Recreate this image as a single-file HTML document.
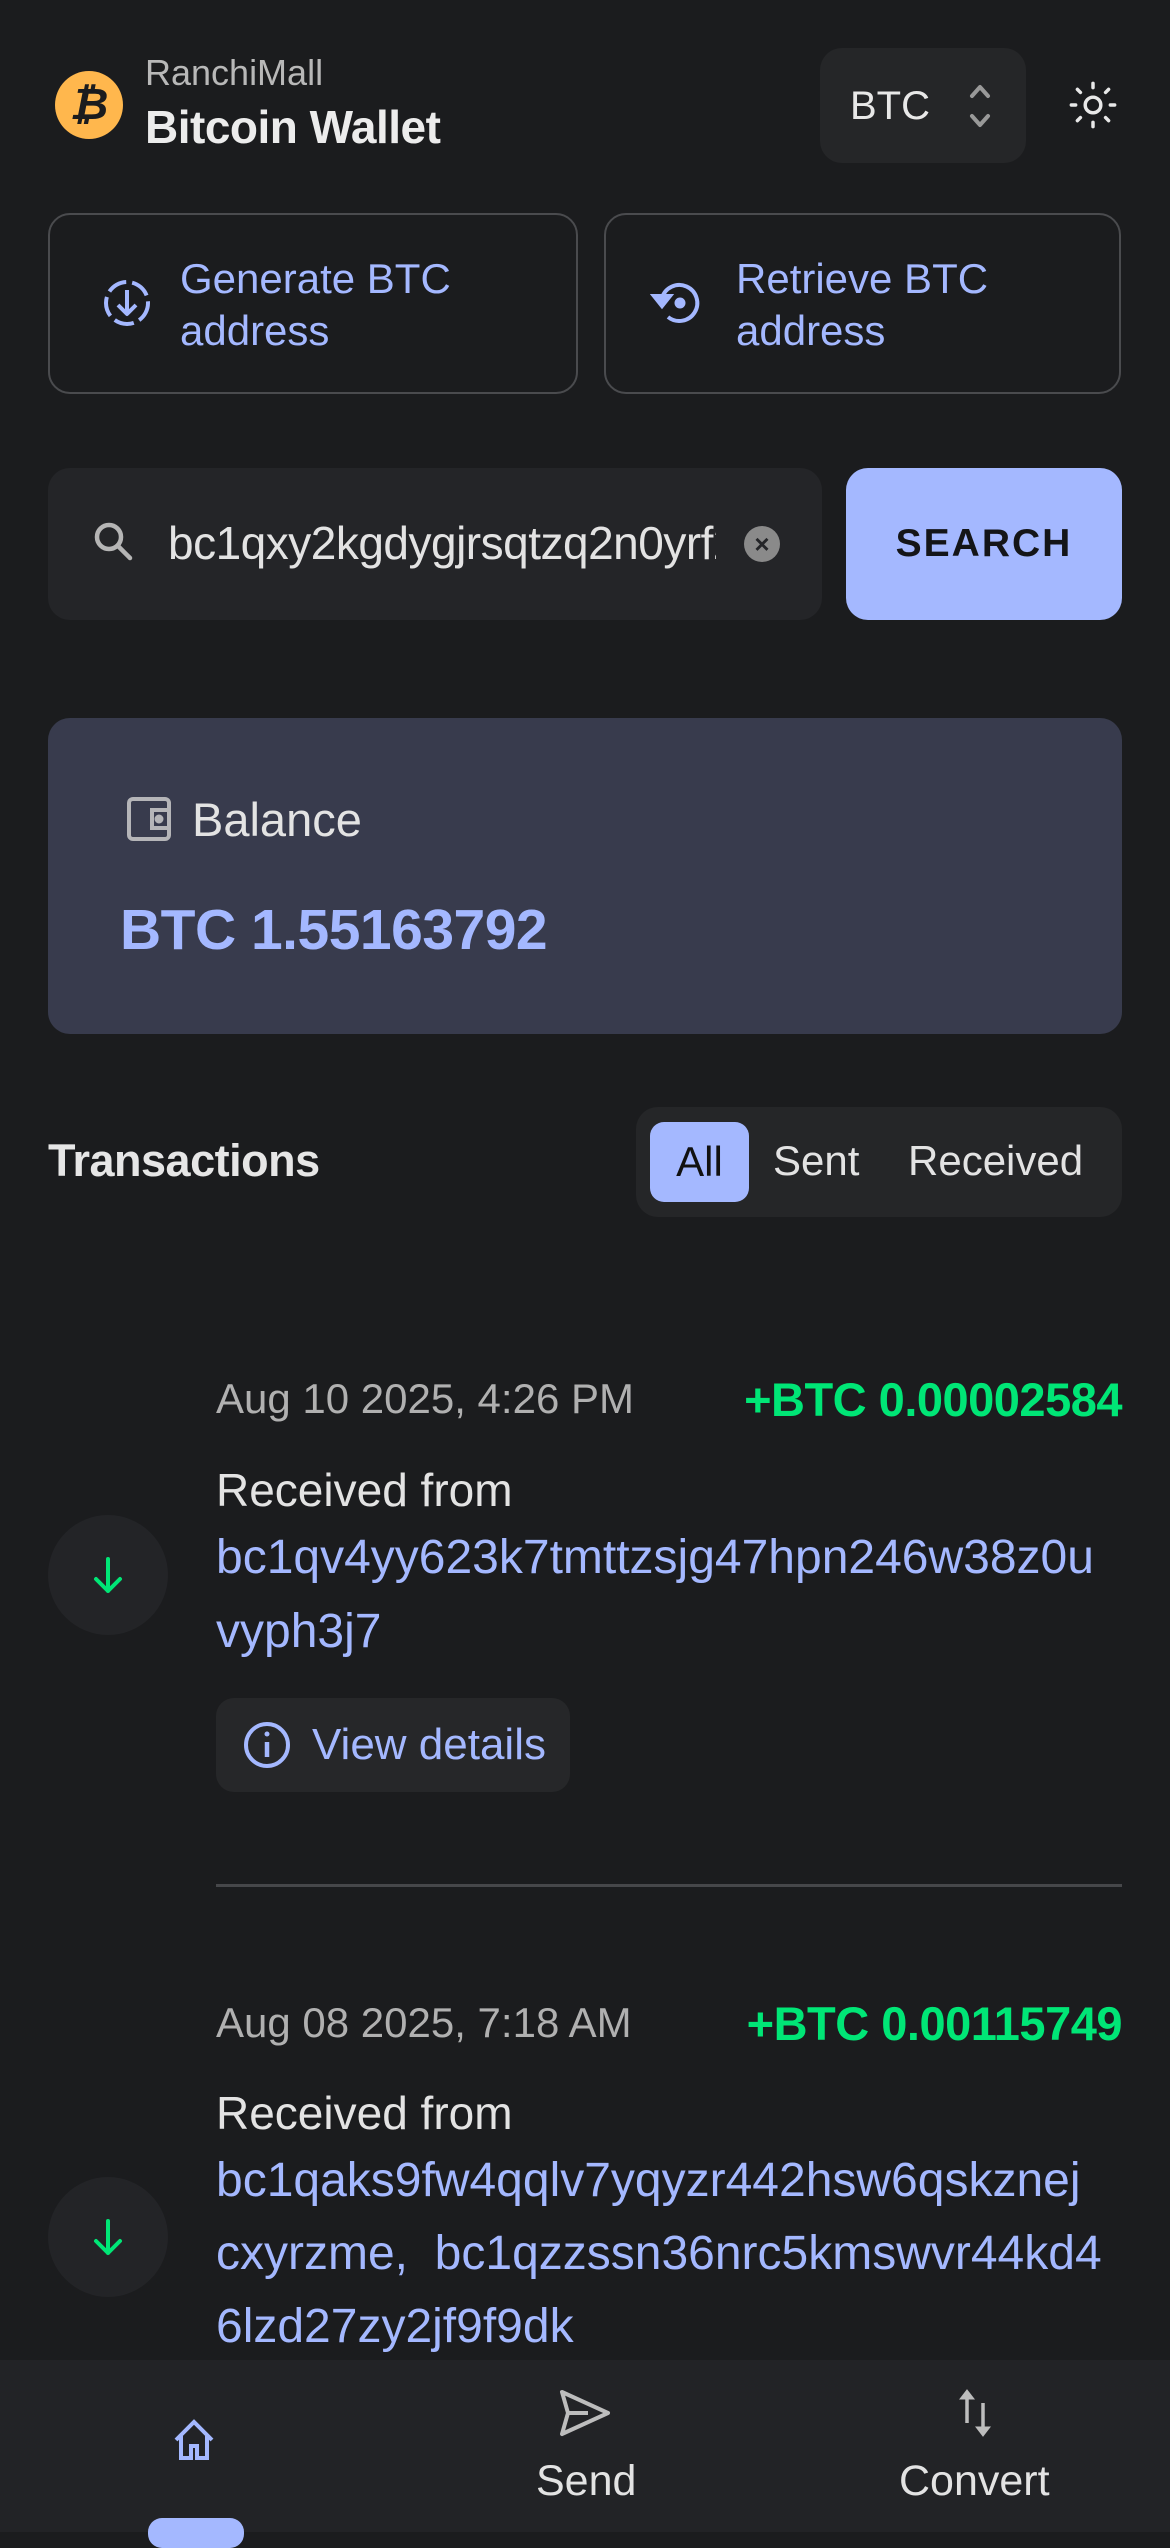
<!DOCTYPE html>
<html><head><meta charset="utf-8"><style>
*{margin:0;padding:0;box-sizing:border-box}
body{width:1170px;height:2532px;background:#1b1c1e;font-family:"Liberation Sans",sans-serif;position:relative;overflow:hidden;color:#e3e3e3}
.a{position:absolute;white-space:nowrap}
.bl{color:#a4b8ff}
</style></head><body>
<!-- header -->
<div class="a" style="left:55px;top:71px;width:68px;height:68px;border-radius:50%;background:#ffb74d"></div>
<div class="a" style="left:55px;top:71px;width:68px;height:68px;line-height:68px;text-align:center;font-weight:bold;font-size:44px;color:#1b1c1e;font-style:italic">₿</div>
<div class="a" style="left:145px;top:52px;font-size:36px;color:#b8b8b8">RanchiMall</div>
<div class="a" style="left:145px;top:100px;font-size:46px;font-weight:bold;color:#ececec;letter-spacing:-0.5px">Bitcoin Wallet</div>
<div class="a" style="left:820px;top:48px;width:206px;height:115px;border-radius:22px;background:#252628"></div>
<div class="a" style="left:850px;top:84px;font-size:40px;color:#e8e8e8">BTC</div>
<svg class="a" style="left:962px;top:80px" width="36" height="52" viewBox="0 0 36 52" fill="none" stroke="#999" stroke-width="4" stroke-linecap="round" stroke-linejoin="round"><path d="M10 16 L18 7 L26 16"/><path d="M10 36 L18 45 L26 36"/></svg>
<svg class="a" style="left:1067px;top:79px" width="52" height="52" viewBox="0 0 60 60" fill="none" stroke="#e8e8e8" stroke-width="4" stroke-linecap="round"><circle cx="30" cy="30" r="9"/><path d="M30 5v5M30 50v5M5 30h5M50 30h5M12 12l3.5 3.5M44.5 44.5L48 48M12 48l3.5-3.5M44.5 15.5L48 12"/></svg>
<!-- action buttons -->
<div class="a" style="left:48px;top:213px;width:530px;height:181px;border:2px solid #4a4b4e;border-radius:22px"></div>
<div class="a" style="left:604px;top:213px;width:517px;height:181px;border:2px solid #4a4b4e;border-radius:22px"></div>
<svg class="a" style="left:100px;top:276px" width="54" height="54" viewBox="0 0 54 54" fill="none" stroke="#a4b8ff" stroke-width="4"><circle cx="27" cy="27" r="21" stroke-dasharray="20 6"/><path d="M27 14v24M18 29l9 9 9-9" stroke-linejoin="round"/></svg>
<svg class="a" style="left:650px;top:276px" width="54" height="54" viewBox="0 0 54 54" fill="none" stroke="#a4b8ff" stroke-width="4"><path d="M12 22 A18 18 0 1 1 18 41"/><path d="M4 20 L12 30 L20 20 Z" fill="#a4b8ff"/><circle cx="30" cy="27" r="3.5" fill="#a4b8ff"/></svg>
<div class="a bl" style="left:180px;top:253px;font-size:42px;line-height:52px">Generate BTC<br>address</div>
<div class="a bl" style="left:736px;top:253px;font-size:42px;line-height:52px">Retrieve BTC<br>address</div>
<!-- search -->
<div class="a" style="left:48px;top:468px;width:774px;height:152px;border-radius:22px;background:#242528"></div>
<svg class="a" style="left:90px;top:518px" width="48" height="48" viewBox="0 0 48 48" fill="none" stroke="#b5b5b5" stroke-width="4.5" stroke-linecap="round"><circle cx="19" cy="19" r="12"/><path d="M28 28l12 12"/></svg>
<div class="a" style="left:168px;top:516px;width:548px;overflow:hidden;font-size:46px;color:#e3e3e3;letter-spacing:-0.5px">bc1qxy2kgdygjrsqtzq2n0yrf2493p83kkfjhx0wlh</div>
<div class="a" style="left:744px;top:526px;width:36px;height:36px;border-radius:50%;background:#8a8a8a;color:#242528;font-size:26px;font-weight:bold;line-height:36px;text-align:center">×</div>
<div class="a" style="left:846px;top:468px;width:276px;height:152px;border-radius:22px;background:#a4b8ff;text-align:center;line-height:152px;font-size:39px;font-weight:bold;color:#141518;letter-spacing:2px">SEARCH</div>
<!-- balance -->
<div class="a" style="left:48px;top:718px;width:1074px;height:316px;border-radius:22px;background:#383b4d"></div>
<svg class="a" style="left:126px;top:796px" width="46" height="46" viewBox="0 0 46 46" fill="none" stroke="#b5b5b8" stroke-width="4"><rect x="3" y="3" width="40" height="40" rx="4"/><path d="M43 14H26v18h17"/><circle cx="33" cy="23" r="2.5" fill="#b5b5b8"/></svg>
<div class="a" style="left:192px;top:792px;font-size:47px;color:#e3e3e3">Balance</div>
<div class="a bl" style="left:120px;top:897px;font-size:57px;font-weight:bold;letter-spacing:-0.5px">BTC 1.55163792</div>
<!-- transactions header -->
<div class="a" style="left:48px;top:1135px;font-size:45px;font-weight:bold;color:#e6e6e6;letter-spacing:-0.5px">Transactions</div>
<div class="a" style="left:636px;top:1107px;width:486px;height:110px;border-radius:22px;background:#252628"></div>
<div class="a" style="left:650px;top:1122px;width:99px;height:80px;border-radius:14px;background:#a4b8ff;color:#111;font-size:42px;text-align:center;line-height:80px">All</div>
<div class="a" style="left:773px;top:1137px;font-size:42px;color:#e3e3e3">Sent</div>
<div class="a" style="left:908px;top:1137px;font-size:42px;color:#e3e3e3">Received</div>
<!-- tx1 -->
<div class="a" style="left:216px;top:1375px;font-size:42px;color:#b0b0b0">Aug 10 2025, 4:26 PM</div>
<div class="a" style="right:48px;top:1372px;font-size:47px;font-weight:bold;color:#00e676;letter-spacing:-0.5px">+BTC 0.00002584</div>
<div class="a" style="left:216px;top:1463px;font-size:46px;color:#e3e3e3">Received from</div>
<div class="a bl" style="left:216px;top:1521px;font-size:48px;line-height:74px">bc1qv4yy623k7tmttzsjg47hpn246w38z0u<br>vyph3j7</div>
<div class="a" style="left:48px;top:1515px;width:120px;height:120px;border-radius:50%;background:#232427"></div>
<svg class="a" style="left:88px;top:1555px" width="40" height="40" viewBox="0 0 40 40" fill="none" stroke="#00e676" stroke-width="4" stroke-linecap="round" stroke-linejoin="round"><path d="M20 4v32M8 24l12 12 12-12"/></svg>
<div class="a" style="left:216px;top:1698px;width:354px;height:94px;border-radius:18px;background:#262729"></div>
<svg class="a" style="left:242px;top:1720px" width="50" height="50" viewBox="0 0 50 50" fill="none" stroke="#a4b8ff" stroke-width="4"><circle cx="25" cy="25" r="21"/><path d="M25 22v15" stroke-width="4.5"/><circle cx="25" cy="14" r="2.5" fill="#a4b8ff" stroke="none"/></svg>
<div class="a bl" style="left:312px;top:1720px;font-size:44px">View details</div>
<div class="a" style="left:216px;top:1884px;width:906px;height:3px;background:#46474a"></div>
<!-- tx2 -->
<div class="a" style="left:216px;top:1999px;font-size:42px;color:#b0b0b0">Aug 08 2025, 7:18 AM</div>
<div class="a" style="right:48px;top:1996px;font-size:47px;font-weight:bold;color:#00e676;letter-spacing:-0.5px">+BTC 0.00115749</div>
<div class="a" style="left:216px;top:2086px;font-size:46px;color:#e3e3e3">Received from</div>
<div class="a bl" style="left:216px;top:2144px;font-size:48px;line-height:73px">bc1qaks9fw4qqlv7yqyzr442hsw6qskznej<br>cxyrzme,&nbsp; bc1qzzssn36nrc5kmswvr44kd4<br>6lzd27zy2jf9f9dk</div>
<div class="a" style="left:48px;top:2177px;width:120px;height:120px;border-radius:50%;background:#232427"></div>
<svg class="a" style="left:88px;top:2217px" width="40" height="40" viewBox="0 0 40 40" fill="none" stroke="#00e676" stroke-width="4" stroke-linecap="round" stroke-linejoin="round"><path d="M20 4v32M8 24l12 12 12-12"/></svg>
<!-- bottom nav -->
<div class="a" style="left:0;top:2360px;width:1170px;height:172px;background:#222326"></div>
<svg class="a" style="left:170px;top:2416px" width="48" height="48" viewBox="0 0 48 48" fill="none" stroke="#a4b8ff" stroke-width="4" stroke-linejoin="miter"><path d="M6 24L24 6l18 18M11 20v22h10V30h6v12h10V20"/></svg>
<div class="a" style="left:148px;top:2518px;width:96px;height:30px;border-radius:14px;background:#a4b8ff"></div>
<svg class="a" style="left:558px;top:2388px" width="54" height="50" viewBox="0 0 54 50" fill="none" stroke="#bdbdbd" stroke-width="4" stroke-linejoin="round"><path d="M4 4L50 25L4 46L10 25Z"/><path d="M10 25H30"/></svg>
<div class="a" style="left:536px;top:2457px;font-size:43px;color:#e3e3e3">Send</div>
<svg class="a" style="left:955px;top:2387px" width="40" height="52" viewBox="0 0 40 52" fill="#bdbdbd" stroke="#bdbdbd" stroke-width="3.5"><path d="M12 36V8" /><path d="M5 12L12 3L19 12Z" stroke-width="1"/><path d="M28 16V44"/><path d="M21 40L28 49L35 40Z" stroke-width="1"/></svg>
<div class="a" style="left:899px;top:2457px;font-size:43px;color:#e3e3e3">Convert</div>
</body></html>
